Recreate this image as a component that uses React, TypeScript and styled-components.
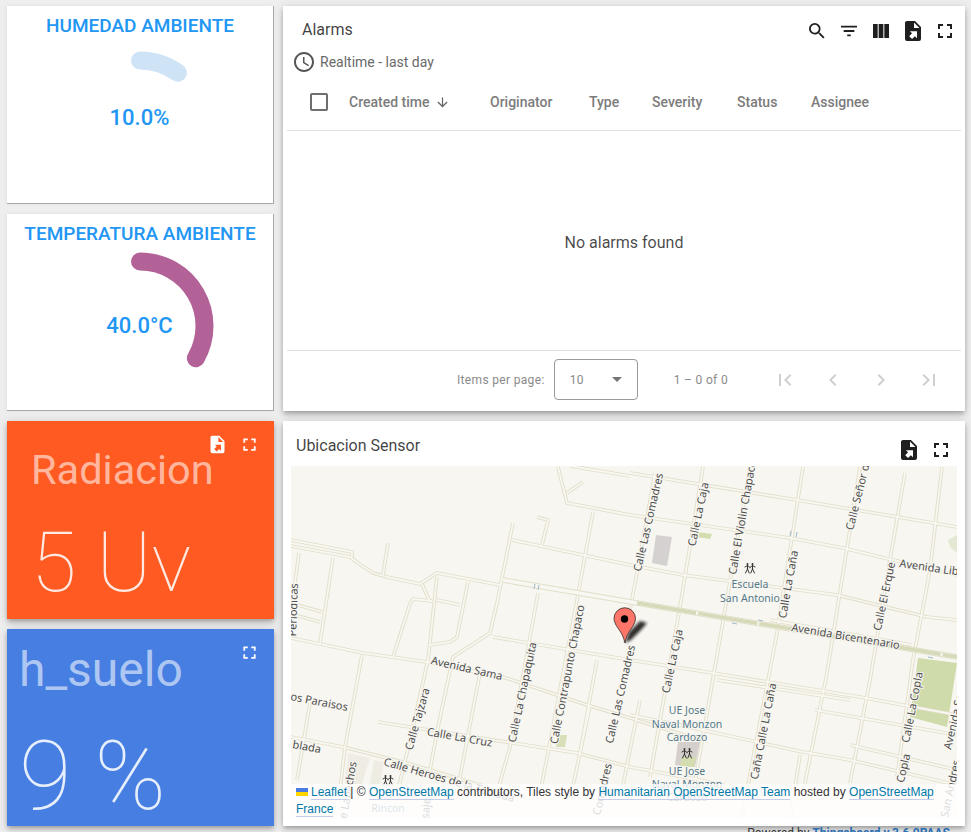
import React from "react";
import styled, { createGlobalStyle } from "styled-components";

const Global = createGlobalStyle`
  html, body { margin: 0; padding: 0; height: 832px; overflow: hidden; background: #eeeeee; }
  body { font-family: Roboto, "Liberation Sans", sans-serif; }
`;

const Page = styled.div`
  padding: 6px 6px 0 7px;
  box-sizing: border-box;
  height: 832px;
  overflow: hidden;
`;
const Dashboard = styled.div`
  display: grid;
  grid-template-columns: 267px 682px;
  grid-template-rows: 198px 197px 198px 197px;
  column-gap: 9px;
  row-gap: 10px;
`;
const shadow = "0 2px 4px -1px rgba(0,0,0,.2), 0 4px 5px 0 rgba(0,0,0,.14), 0 1px 10px 0 rgba(0,0,0,.12)";

const GaugeCard = styled.section`
  background: #fff;
  box-sizing: border-box;
  border-right: 1px solid #a9a9a9;
  border-bottom: 1px solid #a9a9a9;
  box-shadow: -1px 0 4px rgba(0,0,0,.06);
  display: flex;
  flex-direction: column;
  align-items: center;
  overflow: hidden;
`;
const GaugeTitle = styled.h2`
  margin: 9px 0 0;
  font-size: 19px;
  line-height: 22px;
  font-weight: 500;
  color: #2196f3;
  white-space: nowrap;
`;
const GaugeBody = styled.div`
  position: relative;
  width: 267px;
  height: 160px;
`;
const GaugeSvg = styled.svg`
  display: block;
`;
const GaugeValue = styled.div`
  position: absolute;
  left: 0;
  top: 68px;
  width: 266px;
  text-align: center;
  font-size: 22px;
  line-height: 26px;
  font-weight: 500;
  color: #2196f3;
`;

const Card = styled.section`
  background: #fff;
  box-shadow: ${shadow};
  display: flex;
  flex-direction: column;
  min-width: 0;
  overflow: hidden;
`;
const AlarmsCard = styled(Card)`
  grid-column: 2;
  grid-row: 1 / span 2;
`;
const MapCard = styled(Card)`
  grid-column: 2;
  grid-row: 3 / span 2;
  padding: 0 8px 8px;
  box-sizing: border-box;
`;
const AlarmsHeader = styled.header`
  display: flex;
  align-items: center;
  justify-content: space-between;
  padding: 13px 8px 0 19px;
  height: 24px;
`;
const CardTitle = styled.h3`
  margin: 0;
  font-size: 16px;
  line-height: 20px;
  font-weight: 400;
  color: rgba(0, 0, 0, 0.76);
`;
const AlarmsTitle = styled(CardTitle)`
  margin-top: -3px;
`;
const Actions = styled.div`
  display: flex;
  gap: 8px;
`;
const Glyph = styled.svg<{ $tone?: string }>`
  display: block;
  width: 24px;
  height: 24px;
  flex: none;
  fill: ${(p) => p.$tone || "#1f1f1f"};
`;
const SortGlyph = styled(Glyph)`
  width: 15px;
  height: 15px;
  margin-left: 2px;
`;
const TimeRow = styled.div`
  display: flex;
  align-items: center;
  gap: 4px;
  margin: 7px 0 0 9px;
  height: 24px;
  font-size: 14px;
  color: #6a6a6a;
`;
const HeadRow = styled.div`
  display: flex;
  align-items: center;
  height: 56px;
  margin: 0 4px;
  border-bottom: 1px solid #e0e0e0;
  font-size: 14px;
  font-weight: 500;
  color: #7c7c7c;
`;
const Checkbox = styled.span`
  box-sizing: border-box;
  display: block;
  width: 18px;
  height: 18px;
  border: 2px solid #6e6e6e;
  border-radius: 2px;
  margin: 0 21px 0 23px;
`;
const HeadCell = styled.span<{ $w: number }>`
  display: flex;
  align-items: center;
  width: ${(p) => p.$w}px;
  flex: none;
  gap: 4px;
`;
const Empty = styled.div`
  height: 219px;
  box-sizing: content-box;
  display: flex;
  align-items: center;
  justify-content: center;
  font-size: 16px;
  color: rgba(0, 0, 0, 0.72);
  margin: 0 4px;
  border-bottom: 1px solid #e0e0e0;
`;
const EmptyText = styled.span`
  margin-top: 3px;
`;
const Footer = styled.div`
  display: flex;
  align-items: center;
  height: 60px;
  padding: 0 0 3px 174px;
  box-sizing: border-box;
  font-size: 12px;
  letter-spacing: 0.33px;
  color: #8a8a8a;
`;
const PageSelect = styled.div`
  box-sizing: border-box;
  width: 84px;
  height: 41px;
  margin-left: 9px;
  border: 1px solid #9a9a9a;
  border-radius: 4px;
  display: flex;
  align-items: center;
  justify-content: space-between;
  padding: 0 15px;
  color: #8a8a8a;
`;
const Caret = styled.span`
  width: 0;
  height: 0;
  border-left: 5px solid transparent;
  border-right: 5px solid transparent;
  border-top: 5px solid #757575;
`;
const RangeLabel = styled.span`
  margin-left: 36px;
  width: 54px;
  white-space: nowrap;
`;
const Pager = styled.div`
  display: flex;
  gap: 24px;
  margin-left: 45px;
`;
const MapHeader = styled.header`
  display: flex;
  align-items: center;
  justify-content: space-between;
  height: 45px;
  padding: 0 4px 0 5px;
`;
const MapActions = styled(Actions)`
  margin-top: 13px;
`;
const MapTitle = styled(CardTitle)`
  margin-top: 5px;
`;
const MapFrame = styled.div`
  position: relative;
  width: 666px;
  height: 352px;
  overflow: hidden;
  background: #f7f6f1;
`;
const MapArt = styled.svg`
  display: block;
  text {
    font-family: "Noto Sans", "Open Sans", sans-serif;
  }
`;
const Attribution = styled.div`
  position: absolute;
  left: 0;
  right: 0;
  bottom: 0;
  padding: 0 5px;
  background: rgba(255, 255, 255, 0.8);
  font-family: "Liberation Sans", Arial, sans-serif;
  font-size: 12px;
  line-height: 17px;
  color: #333;
`;
const Flag = styled.svg`
  margin-right: 3px;
`;
const AttrLink = styled.span`
  color: #0078a8;
  border-bottom: 1px solid #c5cde8;
`;

const ValueCard = styled.section<{ $bg: string }>`
  position: relative;
  background: ${(p) => p.$bg};
  box-shadow: ${shadow};
  overflow: hidden;
  display: flex;
  flex-direction: column;
`;
const ValueTitle = styled.div<{ $x: number; $y: number; $size: number }>`
  margin: ${(p) => p.$y}px 0 0 ${(p) => p.$x}px;
  font-size: ${(p) => p.$size}px;
  line-height: 48px;
  color: rgba(255, 255, 255, 0.58);
  white-space: nowrap;
`;
const ValueNumber = styled.div<{ $x: number; $y: number; $size: number }>`
  margin: ${(p) => p.$y}px 0 0 ${(p) => p.$x}px;
  font-size: ${(p) => p.$size}px;
  line-height: 90px;
  font-weight: 100;
  color: rgba(255, 255, 255, 0.87);
  white-space: nowrap;
`;
const ValueActions = styled.div`
  position: absolute;
  top: 13px;
  right: 14px;
  display: flex;
  gap: 11px;
`;
const SmallGlyph = styled.svg`
  display: block;
  width: 21px;
  height: 21px;
  fill: #fff;
`;
const Powered = styled.div`
  margin: 0 15px 0 0;
  text-align: right;
  font-size: 12px;
  line-height: 14px;
  color: #333;
`;
const PoweredLink = styled.b`
  color: #2a6db0;
`;

const P = {
  search: "M15.5 14h-.79l-.28-.27A6.47 6.47 0 0 0 16 9.5 6.5 6.5 0 1 0 9.5 16c1.61 0 3.09-.59 4.23-1.57l.27.28v.79l5 4.99L20.49 19l-4.99-5zm-6 0C7.01 14 5 11.99 5 9.5S7.01 5 9.5 5 14 7.01 14 9.5 11.99 14 9.5 14z",
  filter: "M10 18h4v-2h-4v2zM3 6v2h18V6H3zm3 7h12v-2H6v2z",
  columns: "M4 5h4.67v14H4V5zm5.67 0h4.67v14H9.67V5zm5.66 0H20v14h-4.67V5z",
  exportFile: "M6 2C4.89 2 4 2.9 4 4v16a2 2 0 0 0 2 2h12a2 2 0 0 0 2-2V8l-6-6H6zm7 1.5L18.5 9H13V3.5zM8.93 12.22H16v7.07l-2.12-2.12L11.05 20l-2.83-2.83 2.83-2.82-2.12-2.13z",
  full: "M7 14H5v5h5v-2H7v-3zm-2-4h2V7h3V5H5v5zm12 7h-3v2h5v-5h-2v3zM14 5v2h3v3h2V5h-5z",
  first: "M18.41 16.59 13.82 12l4.59-4.59L17 6l-6 6 6 6 1.41-1.41zM6 6h2v12H6z",
  prev: "M15.41 7.41 14 6l-6 6 6 6 1.41-1.41L10.83 12z",
  next: "M10 6 8.59 7.41 13.17 12l-4.58 4.59L10 18l6-6z",
  last: "M5.59 7.41 10.18 12l-4.59 4.59L7 18l6-6-6-6-1.41 1.41zM16 6h2v12h-2z",
  clock: "M11.99 2C6.47 2 2 6.48 2 12s4.47 10 9.99 10C17.52 22 22 17.52 22 12S17.52 2 11.99 2zM12 20c-4.42 0-8-3.58-8-8s3.58-8 8-8 8 3.58 8 8-3.58 8-8 8zm.5-13H11v6l5.25 3.15.75-1.23-4.5-2.67z",
  arrow: "M20 12l-1.41-1.41L13 16.17V4h-2v12.17l-5.58-5.59L4 12l8 8 8-8z",
};

const Icon = ({ d, tone, view = "0 0 24 24" }: { d: string; tone?: string; view?: string }) => (
  <Glyph viewBox={view} $tone={tone}><path d={d} /></Glyph>
);
const Small = ({ d }: { d: string }) => (
  <SmallGlyph viewBox="0 0 24 24"><path d={d} /></SmallGlyph>
);
const TIGHT = "-1.5 -1.5 27 27";

const arcPath = (cx: number, cy: number, r: number, sweep: number) => {
  const a = (sweep * Math.PI) / 180;
  return `M${cx} ${cy - r}A${r} ${r} 0 0 1 ${(cx + r * Math.sin(a)).toFixed(2)} ${(cy - r * Math.cos(a)).toFixed(2)}`;
};

const Gauge = ({ title, value, sweep, color, cy }: { title: string; value: string; sweep: number; color: string; cy: number }) => (
  <GaugeCard>
    <GaugeTitle>{title}</GaugeTitle>
    <GaugeBody>
      <GaugeSvg width="267" height="160">
        <path d={arcPath(133, cy, 64.5, sweep)} fill="none" stroke={color} strokeWidth="18" strokeLinecap="round" />
      </GaugeSvg>
      <GaugeValue>{value}</GaugeValue>
    </GaugeBody>
  </GaugeCard>
);

// Street network, in page coordinates of the screenshot
const roads: string[] = [
  "291,540 352,552 352,557",
  "291,546 350,557 358,563 373,573 387,577 420,584 437,573 500,585",
  "388,543 383,575",
  "291,638 363,653 427,662 503,677 587,705 630,718 700,740",
  "299,553 291,612",
  "333,558 320,643",
  "362,655 345,747 340,790",
  "310,703 297,780",
  "291,603 322,612",
  "291,614 320,622",
  "393,657 410,604 413,599 432,601",
  "437,577 428,660 407,753 398,790",
  "422,584 430,602",
  "468,582 457,637 450,642 430,645",
  "437,600 460,605",
  "513,523 497,603 490,633 453,657 438,727 430,770",
  "480,673 460,777 455,800",
  "512,540 630,565 683,575 837,595 927,617 957,620",
  "537,517 548,520 542,545",
  "593,512 577,600 548,753 540,793",
  "538,593 510,747 497,793",
  "493,637 630,660 713,673 860,697 957,715",
  "558,467 567,503 630,515 790,538 843,548 893,560 957,575",
  "567,493 583,482",
  "378,722 577,753 630,767 700,780 790,800",
  "291,737 343,747 407,763 480,785 540,800",
  "597,660 580,753",
  "590,706 570,800",
  "630,473 797,500 957,527",
  "570,466 630,476",
  "655,473 637,573 628,620",
  "703,467 680,607 650,777",
  "750,467 725,610 693,793",
  "803,467 777,633 740,827",
  "860,467 827,673 803,793",
  "905,473 890,560 870,680 850,783",
  "942,467 930,570 913,660 897,777",
  "630,715 670,723 803,752 850,760 957,785",
  "717,680 850,700",
  "770,620 912,645",
  "800,755 790,820",
  "640,700 620,800",
  "850,745 957,770",
  "815,710 957,735",
];

const labels: { t: string; x: number; y: number; a: number; anchor?: "start" | "middle" }[] = [
  { t: "Avenida Sama", x: 466, y: 672, a: 13 },
  { t: "Calle Tajzara", x: 421, y: 720, a: -74 },
  { t: "Calle La Chapaquita", x: 526, y: 693, a: -78 },
  { t: "Calle Contrapunto Chapaco", x: 571, y: 675, a: -79 },
  { t: "Calle Las Comadres", x: 624, y: 695, a: -77 },
  { t: "Calle Las Comadres", x: 652, y: 523, a: -77 },
  { t: "Calle La Caja", x: 702, y: 515, a: -78 },
  { t: "Calle La Caja", x: 676, y: 662, a: -78 },
  { t: "Calle El Violin Chapaco", x: 746, y: 518, a: -80 },
  { t: "Calle La Caña", x: 792, y: 585, a: -80 },
  { t: "Caña Calle La Caña", x: 767, y: 732, a: -79 },
  { t: "Calle Señor de", x: 862, y: 495, a: -76 },
  { t: "Calle El Erque", x: 888, y: 597, a: -78 },
  { t: "Calle La Copla", x: 916, y: 708, a: -79 },
  { t: "Copla", x: 907, y: 769, a: -77 },
  { t: "Avenida Bicentenario", x: 845, y: 640, a: 9.5 },
  { t: "Avenida Libertad", x: 899, y: 567, a: 8, anchor: "start" },
  { t: "Avenida San", x: 951, y: 750, a: -77, anchor: "start" },
  { t: "San Andres", x: 948, y: 818, a: -78, anchor: "start" },
  { t: "Calle La Cruz", x: 459, y: 741, a: 10 },
  { t: "Calle Heroes de la Tablada", x: 383, y: 765, a: 16, anchor: "start" },
  { t: "blada", x: 292, y: 748, a: 10, anchor: "start" },
  { t: "os Paraisos", x: 290, y: 700, a: 11, anchor: "start" },
  { t: "Periodicas", x: 297, y: 610, a: -88 },
  { t: "Calle Lapachos", x: 350, y: 800, a: -80 },
  { t: "Pasaje", x: 429, y: 815, a: -85 },
  { t: "Comadres", x: 606, y: 790, a: -77 },
];

const pois: { t: string; x: number; y: number }[] = [
  { t: "Escuela", x: 750, y: 588 },
  { t: "San Antonio", x: 750, y: 602 },
  { t: "UE Jose", x: 687, y: 714 },
  { t: "Naval Monzon", x: 687, y: 728 },
  { t: "Cardozo", x: 687, y: 741 },
  { t: "UE Jose", x: 687, y: 775 },
  { t: "Naval Monzon", x: 687, y: 788 },
  { t: "Cardozo", x: 687, y: 801 },
  { t: "Rincon", x: 388, y: 812 },
];

const oneWays: string[] = [
  "534,589 535,584", "538,590 539,585", "790,536 791,531", "796,537 797,532",
  "732,623 737,624", "758,620 763,621", "928,657 933,658",
];

const School = ({ x, y }: { x: number; y: number }) => (
  <g transform={`translate(${x} ${y})`} stroke="#333" strokeWidth="1" fill="none" strokeLinecap="round">
    <circle cx="-2.5" cy="-4" r="1" fill="#333" stroke="none" />
    <circle cx="2.5" cy="-4" r="1" fill="#333" stroke="none" />
    <path d="M-2.5-3V1M-2.5 1-4.5 5M-2.5 1-.8 5M-5-1-2.5-2.5 0-.5M2.5-3V1M2.5 1 .8 5M2.5 1 4.5 5M0-.5 2.5-2.5 5-1" />
  </g>
);

const MapDrawing = () => (
  <MapArt width="666" height="352" viewBox="291 466 666 352">
    <defs>
      <filter id="pinBlur" x="-30%" y="-30%" width="160%" height="160%">
        <feGaussianBlur stdDeviation="1.4" />
      </filter>
    </defs>
    <polygon points="918,658 957,663 947,727 910,717" fill="#cfdbab" />
    <polygon points="698,532 712,534 710,539 697,537" fill="#d3ddb0" />
    <polygon points="656,535 672,537 667,566 652,563" fill="#d5d1d0" />
    <polygon points="948,540 957,535 957,553 950,547" fill="#e4e9d3" />
    <polygon points="558,735 567,735 565,747 556,747" fill="#d6dfb8" />
    <polygon points="678,742 700,742 695,767 675,765" fill="#d5d0cb" />
    <polygon points="682,757 696,757 694,767 680,766" fill="#d3ddb0" />
    <polygon points="348,753 370,758 362,784 345,784" fill="#efece4" />
    <polygon points="374,760 384,762 380,784 370,784" fill="#efece4" />
    {roads.map((r, i) => (
      <polyline key={`c${i}`} points={r} fill="none" stroke="#e2dec8" strokeWidth="3.6" strokeLinejoin="round" />
    ))}
    {roads.map((r, i) => (
      <polyline key={`i${i}`} points={r} fill="none" stroke="#f8f7f2" strokeWidth="1.8" strokeLinejoin="round" />
    ))}
    <polyline points="503,580 637,603 957,657" fill="none" stroke="#e2dec8" strokeWidth="5.5" />
    <polyline points="503,580 637,603 957,657" fill="none" stroke="#f8f7f2" strokeWidth="3.6" />
    <polyline points="637,603 957,657" fill="none" stroke="#d6dab8" strokeWidth="3.4" strokeDasharray="60 2" />
    {oneWays.map((w, i) => (
      <polyline key={`w${i}`} points={w} fill="none" stroke="#9fb9c8" strokeWidth="1" />
    ))}
    {labels.map((l, i) => (
      <text
        key={i}
        x={l.x}
        y={l.y}
        fontSize="11"
        fill="#4d4d4d"
        stroke="#f7f6f1"
        strokeWidth="2"
        paintOrder="stroke"
        textAnchor={l.anchor || "middle"}
        transform={`rotate(${l.a} ${l.x} ${l.y})`}
      >
        {l.t}
      </text>
    ))}
    {pois.map((l, i) => (
      <text key={i} x={l.x} y={l.y} fontSize="10.5" fill="#55798a" textAnchor="middle" stroke="#f7f6f1" strokeWidth="1.5" paintOrder="stroke">
        {l.t}
      </text>
    ))}
    <School x={750} y={568} />
    <School x={687} y={753} />
    <School x={388} y={780} />
    <polygon points="625,643 629,632 640,621 647,623 641,630 631,640" fill="#111" opacity=".85" filter="url(#pinBlur)" />
    <path d="M625 643C623 634 619 630 616 625C614 621 614 619 614 618.500A10.700 10.700 0 0 1 635.500 618.500C635.500 622 633 626 631 629C628 633 626 637 625 643Z" fill="#fe7569" stroke="#4a3a36" strokeWidth=".9" />
    <circle cx="624.500" cy="619" r="3.700" fill="#000" />
  </MapArt>
);

export default function App() {
  return (
    <>
      <Global />
      <Page>
        <Dashboard>
          <Gauge title="HUMEDAD AMBIENTE" value="10.0%" sweep={36} color="#cfe3f7" cy={88} />
          <AlarmsCard>
            <AlarmsHeader>
              <AlarmsTitle>Alarms</AlarmsTitle>
              <Actions>
                <Icon d={P.search} view={TIGHT} />
                <Icon d={P.filter} view={TIGHT} />
                <Icon d={P.columns} />
                <Icon d={P.exportFile} />
                <Icon d={P.full} />
              </Actions>
            </AlarmsHeader>
            <TimeRow>
              <Icon d={P.clock} tone="#555" />
              Realtime - last day
            </TimeRow>
            <HeadRow>
              <Checkbox />
              <HeadCell $w={141}>Created time <SortGlyph viewBox="0 0 24 24" $tone="#666"><path d={P.arrow} /></SortGlyph></HeadCell>
              <HeadCell $w={99}>Originator</HeadCell>
              <HeadCell $w={63}>Type</HeadCell>
              <HeadCell $w={85}>Severity</HeadCell>
              <HeadCell $w={74}>Status</HeadCell>
              <HeadCell $w={70}>Assignee</HeadCell>
            </HeadRow>
            <Empty><EmptyText>No alarms found</EmptyText></Empty>
            <Footer>
              Items per page:
              <PageSelect>10<Caret /></PageSelect>
              <RangeLabel>1 – 0 of 0</RangeLabel>
              <Pager>
                <Icon d={P.first} tone="#cfcfcf" />
                <Icon d={P.prev} tone="#cfcfcf" />
                <Icon d={P.next} tone="#cfcfcf" />
                <Icon d={P.last} tone="#cfcfcf" />
              </Pager>
            </Footer>
          </AlarmsCard>
          <Gauge title="TEMPERATURA AMBIENTE" value="40.0°C" sweep={120} color="#b36298" cy={81} />
          <ValueCard $bg="#ff5a21">
            <ValueTitle $x={24} $y={25} $size={41.5}>Radiacion</ValueTitle>
            <ValueNumber $x={24} $y={24} $size={83}>5 Uv</ValueNumber>
            <ValueActions>
              <Small d={P.exportFile} />
              <Small d={P.full} />
            </ValueActions>
          </ValueCard>
          <MapCard>
            <MapHeader>
              <MapTitle>Ubicacion Sensor</MapTitle>
              <MapActions>
                <Icon d={P.exportFile} />
                <Icon d={P.full} />
              </MapActions>
            </MapHeader>
            <MapFrame>
              <MapDrawing />
              <Attribution>
                <Flag width="12" height="8" viewBox="0 0 12 8">
                  <rect width="12" height="4" fill="#4C7BE1" />
                  <rect y="4" width="12" height="4" fill="#FFD500" />
                </Flag>
                <AttrLink>Leaflet</AttrLink> | © <AttrLink>OpenStreetMap</AttrLink> contributors, Tiles style by <AttrLink>Humanitarian OpenStreetMap Team</AttrLink> hosted by <AttrLink>OpenStreetMap France</AttrLink>
              </Attribution>
            </MapFrame>
          </MapCard>
          <ValueCard $bg="#467ee2">
            <ValueTitle $x={12} $y={17} $size={48}>h_suelo</ValueTitle>
            <ValueNumber $x={12} $y={37} $size={96}>9 %</ValueNumber>
            <ValueActions>
              <Small d={P.full} />
            </ValueActions>
          </ValueCard>
        </Dashboard>
        <Powered>Powered by <PoweredLink>Thingsboard v.3.6.0PAAS</PoweredLink></Powered>
      </Page>
    </>
  );
}
